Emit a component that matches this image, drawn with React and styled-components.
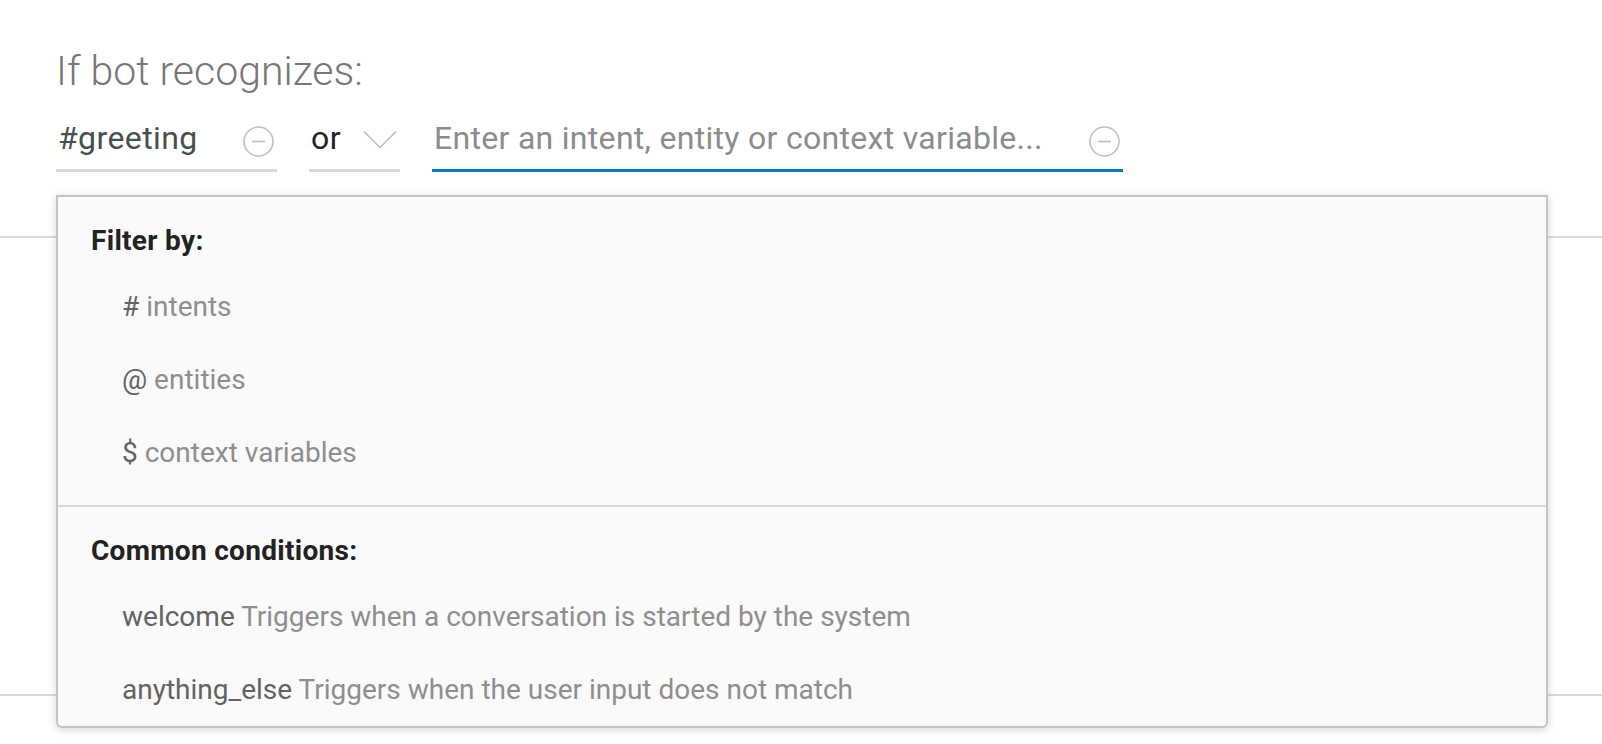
import React from 'react';
import styled, { createGlobalStyle } from 'styled-components';

const GlobalStyle = createGlobalStyle`
  html, body {
    margin: 0;
    padding: 0;
    background: #ffffff;
    font-family: Roboto, 'Liberation Sans', sans-serif;
  }

  *, *:before, *:after {
    box-sizing: border-box;
  }
`;

const Page = styled.div`
  position: relative;
  width: 1602px;
  height: 744px;
  overflow: hidden;
`;

const Header = styled.div`
  padding: 47px 0 0 56px;
`;

const Title = styled.h2`
  margin: 0;
  font-size: 41px;
  line-height: 48px;
  font-weight: 300;
  color: #777777;
`;

const ConditionRow = styled.div`
  display: flex;
  gap: 32px;
  margin-top: 23px;
`;

const Field = styled.div`
  display: flex;
  align-items: center;
  width: ${p => p.width}px;
  padding: 0 3px 11px 2px;
  border-bottom: 3px solid ${p => (p.active ? '#0a78c2' : '#d8d8d8')};
`;

const Token = styled.span`
  flex: 1;
  font-size: 32px;
  line-height: 40px;
  letter-spacing: 0.4px;
  color: ${p => (p.dark ? '#222222' : '#465050')};
`;

const ConditionInput = styled.input`
  flex: 1;
  min-width: 0;
  border: 0;
  outline: 0;
  padding: 0;
  background: transparent;
  font-family: inherit;
  font-size: 32px;
  line-height: 40px;
  height: 40px;
  letter-spacing: 0.3px;
  color: #333;

  &::placeholder {
    color: #8c8c8c;
  }
`;

const IconSlot = styled.span`
  display: flex;
  margin-top: ${p => p.offset || 6}px;
`;

const Canvas = styled.div`
  margin-top: 64px;
  height: 460px;
  border-top: 2px solid #d8d8d8;
  border-bottom: 2px solid #d8d8d8;
`;

const Dropdown = styled.div`
  position: absolute;
  left: 56px;
  top: 195px;
  width: 1492px;
  height: 533px;
  background: #fafafa;
  border: 2px solid #c4c4c4;
  border-radius: 0 0 6px 6px;
  box-shadow: 0 2px 8px rgba(0, 0, 0, 0.16);
`;

const Section = styled.div`
  padding: ${p => p.pad};
  border-top: ${p => (p.divided ? '2px solid #d6d6d6' : '0')};
`;

const SectionTitle = styled.div`
  padding-left: 33px;
  font-size: 28px;
  line-height: 36px;
  font-weight: 700;
  letter-spacing: 0.3px;
  color: #222222;
`;

const OptionList = styled.ul`
  list-style: none;
  margin: 11px 0 0;
  padding: 0 0 0 64px;
`;

const Option = styled.li`
  font-size: 28px;
  line-height: 73px;
  color: #8e8e8e;
`;

const Key = styled.span`
  color: #636363;
`;

const MinusCircle = () => (
  <svg width="31" height="31" viewBox="0 0 31 31" fill="none">
    <circle cx="15.5" cy="15.5" r="14.5" stroke="#b9c3c3" strokeWidth="1.6" />
    <line x1="9" y1="15.5" x2="22" y2="15.5" stroke="#b9c3c3" strokeWidth="1.6" />
  </svg>
);

const Chevron = () => (
  <svg width="34" height="19" viewBox="0 0 34 19" fill="none">
    <polyline points="1,1.5 17,17.5 33,1.5" stroke="#b5c0c0" strokeWidth="1.5" />
  </svg>
);

const filters = [
  { key: '#', label: 'intents' },
  { key: '@', label: 'entities' },
  { key: '$', label: 'context variables' },
];

const common = [
  { key: 'welcome', label: 'Triggers when a conversation is started by the system' },
  { key: 'anything_else', label: 'Triggers when the user input does not match' },
];

const App = () => {
  return (
    <>
      <GlobalStyle />
      <Page>
        <Header>
          <Title>If bot recognizes:</Title>
          <ConditionRow>
            <Field width={221}>
              <Token>#greeting</Token>
              <IconSlot><MinusCircle /></IconSlot>
            </Field>
            <Field width={91}>
              <Token dark>or</Token>
              <IconSlot offset={2}><Chevron /></IconSlot>
            </Field>
            <Field width={691} active>
              <ConditionInput placeholder="Enter an intent, entity or context variable..." />
              <IconSlot><MinusCircle /></IconSlot>
            </Field>
          </ConditionRow>
        </Header>
        <Canvas />
        <Dropdown>
          <Section pad="26px 0 16px">
            <SectionTitle>Filter by:</SectionTitle>
            <OptionList>
              {filters.map(f => (
                <Option key={f.key}>
                  <Key>{f.key}</Key> {f.label}
                </Option>
              ))}
            </OptionList>
          </Section>
          <Section divided pad="26px 0 0">
            <SectionTitle>Common conditions:</SectionTitle>
            <OptionList>
              {common.map(c => (
                <Option key={c.key}>
                  <Key>{c.key}</Key> {c.label}
                </Option>
              ))}
            </OptionList>
          </Section>
        </Dropdown>
      </Page>
    </>
  );
};

export default App;
